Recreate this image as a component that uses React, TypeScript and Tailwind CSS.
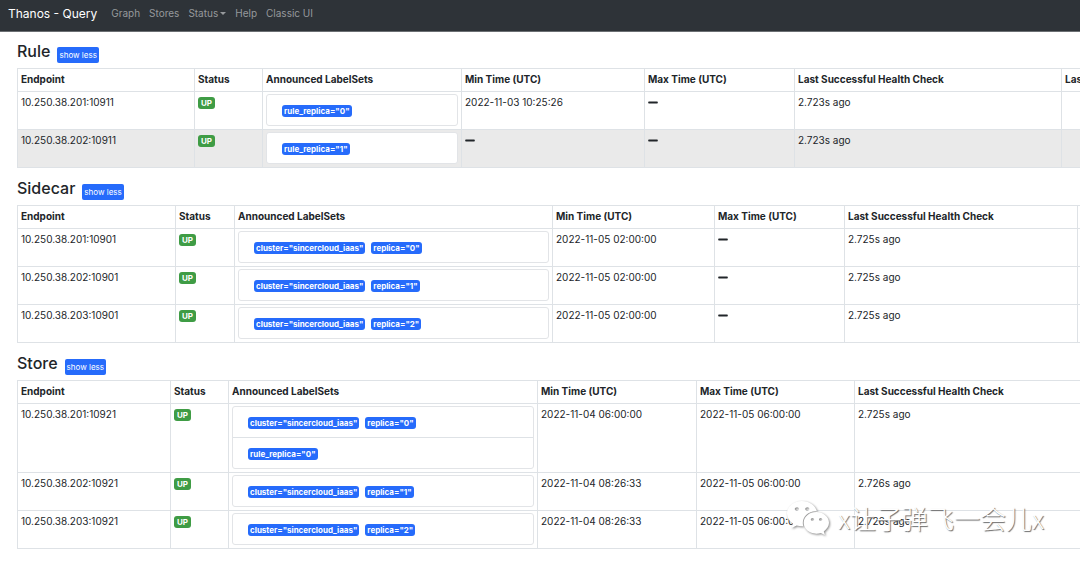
import React, { useState } from 'react'
import { FaMinus, FaWeixin } from 'react-icons/fa'

interface StoreRow {
  endpoint: string
  labelSets: string[][]
  minTime: string | null
  maxTime: string | null
  lastCheck: string
}

interface StorePoolProps {
  title: string
  cols: string[]
  rows: StoreRow[]
  striped?: boolean
}

const headers = [
  'Endpoint',
  'Status',
  'Announced LabelSets',
  'Min Time (UTC)',
  'Max Time (UTC)',
  'Last Successful Health Check',
  'Last Message',
]

const cluster = 'cluster="sincercloud_iaas"'

const pools: StorePoolProps[] = [
  {
    title: 'Rule',
    cols: ['w-[177px]', 'w-[68px]', 'w-[199px]', 'w-[183px]', 'w-[150px]', 'w-[267px]', 'w-[140px]'],
    striped: true,
    rows: [
      {
        endpoint: '10.250.38.201:10911',
        labelSets: [['rule_replica="0"']],
        minTime: '2022-11-03 10:25:26',
        maxTime: null,
        lastCheck: '2.723s ago',
      },
      {
        endpoint: '10.250.38.202:10911',
        labelSets: [['rule_replica="1"']],
        minTime: null,
        maxTime: null,
        lastCheck: '2.723s ago',
      },
    ],
  },
  {
    title: 'Sidecar',
    cols: ['w-[158px]', 'w-[59px]', 'w-[318px]', 'w-[162px]', 'w-[130px]', 'w-[233px]', 'w-[124px]'],
    rows: [
      {
        endpoint: '10.250.38.201:10901',
        labelSets: [[cluster, 'replica="0"']],
        minTime: '2022-11-05 02:00:00',
        maxTime: null,
        lastCheck: '2.725s ago',
      },
      {
        endpoint: '10.250.38.202:10901',
        labelSets: [[cluster, 'replica="1"']],
        minTime: '2022-11-05 02:00:00',
        maxTime: null,
        lastCheck: '2.725s ago',
      },
      {
        endpoint: '10.250.38.203:10901',
        labelSets: [[cluster, 'replica="2"']],
        minTime: '2022-11-05 02:00:00',
        maxTime: null,
        lastCheck: '2.725s ago',
      },
    ],
  },
  {
    title: 'Store',
    cols: ['w-[153px]', 'w-[58px]', 'w-[309px]', 'w-[159px]', 'w-[158px]', 'w-[228px]', 'w-[119px]'],
    rows: [
      {
        endpoint: '10.250.38.201:10921',
        labelSets: [[cluster, 'replica="0"'], ['rule_replica="0"']],
        minTime: '2022-11-04 06:00:00',
        maxTime: '2022-11-05 06:00:00',
        lastCheck: '2.725s ago',
      },
      {
        endpoint: '10.250.38.202:10921',
        labelSets: [[cluster, 'replica="1"']],
        minTime: '2022-11-04 08:26:33',
        maxTime: '2022-11-05 06:00:00',
        lastCheck: '2.726s ago',
      },
      {
        endpoint: '10.250.38.203:10921',
        labelSets: [[cluster, 'replica="2"']],
        minTime: '2022-11-04 08:26:33',
        maxTime: '2022-11-05 06:00:00',
        lastCheck: '2.726s ago',
      },
    ],
  },
]

const Navigation: React.FC = () => (
  <nav className="flex h-8 items-center border-b border-[#6b6f73] bg-[#2e3338] px-2 pb-1 text-[10px] text-[#96999c]">
    <a href="#/" className="mr-[14px] text-xs text-white">
      Thanos - Query
    </a>
    <div className="flex items-center gap-[9px]">
      <a href="#/graph">Graph</a>
      <a href="#/stores">Stores</a>
      <button type="button" className="flex items-center gap-[2px]">
        Status
        <span className="border-x-3 border-t-3 border-x-transparent border-t-current" />
      </button>
      <a href="#/help">Help</a>
      <a href="#/classic">Classic UI</a>
    </div>
  </nav>
)

const Time: React.FC<{ value: string | null }> = ({ value }) =>
  value ? <>{value}</> : <FaMinus className="my-[2px] h-[11px] w-[10px]" aria-label="none" />

const LabelSets: React.FC<{ sets: string[][] }> = ({ sets }) => (
  <ul className="divide-y divide-[#dee2e6] rounded-[3px] border border-[#e2e4e7] bg-white">
    {sets.map((labels, i) => (
      <li key={i} className="flex gap-[6px] px-[15px] pt-[10px] pb-2">
        {labels.map((label) => (
          <span
            key={label}
            className="rounded-[3px] bg-[#266bfb] px-[2px] text-[8px] leading-3 font-bold whitespace-nowrap text-white"
          >
            {label}
          </span>
        ))}
      </li>
    ))}
  </ul>
)

const StorePool: React.FC<StorePoolProps> = ({ title, cols, rows, striped }) => {
  const [open, setOpen] = useState(true)

  return (
    <section className="overflow-hidden pl-[17px]">
      <div className="flex h-9 gap-[7px] pt-[9px]">
        <h2 className="text-base leading-5 font-medium">{title}</h2>
        <button
          type="button"
          onClick={() => setOpen(!open)}
          className="mt-[6px] h-4 rounded-[2px] bg-[#266bfb] px-[2px] text-[8px] leading-4 text-white"
        >
          {open ? 'show less' : 'show more'}
        </button>
      </div>
      {open && (
        <table className="w-0 min-w-full table-fixed border-collapse text-[10px] leading-[15px]">
          <colgroup>
            {cols.map((width, i) => (
              <col key={i} className={width} />
            ))}
          </colgroup>
          <thead>
            <tr>
              {headers.map((header) => (
                <th
                  key={header}
                  className="border border-[#dee2e6] px-[3px] pt-[3px] pb-1 text-left font-bold whitespace-nowrap"
                >
                  {header}
                </th>
              ))}
            </tr>
          </thead>
          <tbody className={striped ? '[&>tr:nth-child(even)]:bg-[#eaeaea]' : ''}>
            {rows.map((row) => (
              <tr key={row.endpoint} className="align-top *:border *:border-[#dee2e6] *:px-[3px]">
                <td className="py-[3px]">{row.endpoint}</td>
                <td className="py-[5px]">
                  <span className="block w-fit rounded-[3px] bg-[#3f9c45] px-[3px] text-[8px] leading-3 font-bold text-white">
                    UP
                  </span>
                </td>
                <td className="pt-[2px] pb-[3px]">
                  <LabelSets sets={row.labelSets} />
                </td>
                <td className="py-[3px]">
                  <Time value={row.minTime} />
                </td>
                <td className="py-[3px]">
                  <Time value={row.maxTime} />
                </td>
                <td className="py-[3px]">{row.lastCheck}</td>
                <td />
              </tr>
            ))}
          </tbody>
        </table>
      )}
    </section>
  )
}

// Account mark laid over the bottom corner of the page
const Watermark: React.FC = () => (
  <div className="pointer-events-none absolute right-9 bottom-[9px] flex items-center gap-2 text-white">
    <FaWeixin className="h-11 w-11 drop-shadow-[1px_1px_1px_#888]" />
    <span className="font-['Noto_Sans_CJK_SC',sans-serif] text-[26px] leading-8 font-light whitespace-nowrap [text-shadow:1px_1px_1px_#666]">
      x让子弹飞一会儿x
    </span>
  </div>
)

export default function App() {
  return (
    <div className="min-h-screen bg-white font-['Inter',sans-serif] text-[#212529]">
      <Navigation />
      <main className="relative flex flex-col gap-px">
        {pools.map((pool) => (
          <StorePool key={pool.title} {...pool} />
        ))}
        <Watermark />
      </main>
    </div>
  )
}
